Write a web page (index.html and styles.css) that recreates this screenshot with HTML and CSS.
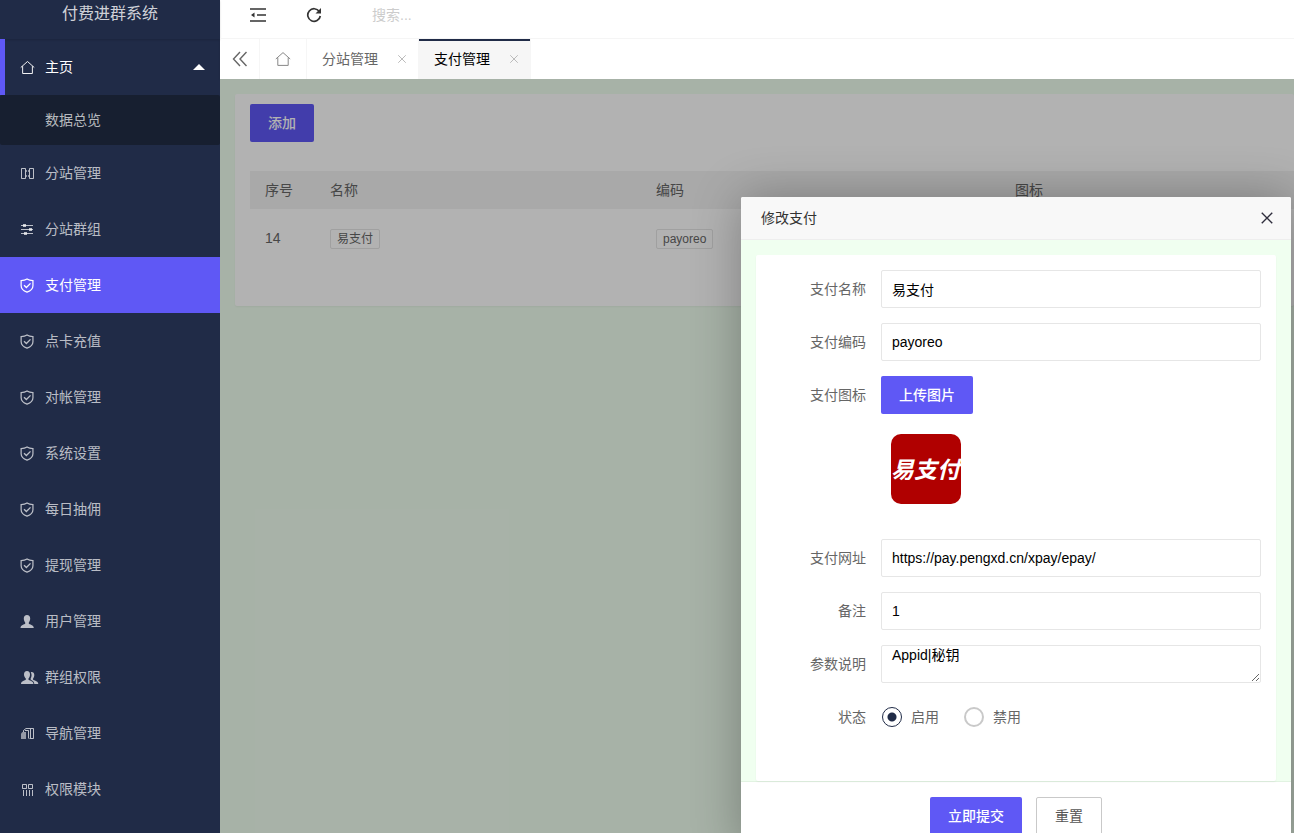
FILE: index.html
```
<!DOCTYPE html>
<html lang="zh-CN">
<head>
<meta charset="utf-8">
<title>付费进群系统</title>
<link rel="stylesheet" href="styles.css">
</head>
<body>
<svg class="sprite" aria-hidden="true">
  <symbol id="i-home" viewBox="0 0 16 16"><path d="M.8 8 8 1.600 15.200 8M2.800 6.600v7.800h10.400V6.600" fill="none" stroke="currentColor"/></symbol>
  <symbol id="i-shield" viewBox="0 0 16 16"><path d="M7.500 1c1.800 1.200 3.800 1.700 6.300 1.800v5.400c0 3-2.300 5.400-6.300 6.900-4-1.500-6.300-3.900-6.300-6.900V2.800C3.700 2.700 5.700 2.200 7.500 1z" fill="none" stroke="currentColor" stroke-width="1.300"/><path d="m4.300 7.700 2.500 2.500 4.400-4.500" fill="none" stroke="currentColor" stroke-width="1.400"/></symbol>
  <symbol id="i-columns" viewBox="0 0 15 15"><path d="M1.500 2.500h4v10h-4zM9.500 2.500h4v10h-4z" fill="none" stroke="currentColor"/><path d="M6 4h1v2H6zM8 4h1v2H8zM6 9h1v2H6zM8 9h1v2H8z" fill="currentColor" opacity=".7"/></symbol>
  <symbol id="i-sliders" viewBox="0 0 15 15"><path d="M1 3.500h12M1 7.500h12M1 11.500h12" stroke="currentColor"/><path d="M3 2h3v3H3zM9 6h3v3H9zM4 10h3v3H4z" fill="currentColor"/></symbol>
  <symbol id="i-user" viewBox="0 0 15 15"><path d="M7 1c2 0 3.200 1.500 3.200 3.500 0 1.700-.7 3-1.400 3.900v1.300c.5.700 5 1 5 4.300H.5c0-3.300 4.200-3.600 4.700-4.300V8.400C4.500 7.500 3.800 6.200 3.800 4.500 3.800 2.500 5 1 7 1z" fill="currentColor"/></symbol>
  <symbol id="i-users" viewBox="0 0 19 15"><path d="M7 1c2 0 3 1.500 3 3.500 0 1.700-.6 3-1.500 3.900v1.300c.5.700 5 1 5 4.300H1c0-3.300 4.300-3.600 4.800-4.300V8.400C4.900 7.500 4 6.200 4 4.500 4 2.500 5 1 7 1z" fill="currentColor"/><path d="M11.600 2c1.700 0 2.700 1.300 2.700 3 0 1.500-.5 2.600-1.200 3.400v1.400c.5.700 5.200 1 5.200 4.200h-4c0-2.200-1.800-3.500-3.600-4.300V8.300c.9-1.300 1.400-4 .1-6.100z" fill="currentColor"/></symbol>
  <symbol id="i-pages" viewBox="0 0 15 15"><path d="M3.500 6V4.500L6 2.500h7.500v10h-4M5 4.500h3.500v8M10.500 3v9" fill="none" stroke="currentColor"/><path d="M1 7.500 2.500 6H6v7H1z" fill="currentColor" opacity=".75"/></symbol>
  <symbol id="i-grid" viewBox="0 0 15 15"><path d="M2.500 2.500h4v4h-4zM8.500 2.500h4v4h-4zM3.500 8v6M6.500 8v6M9.500 8v6M12.500 8v6" fill="none" stroke="currentColor"/></symbol>
  <symbol id="i-cross" viewBox="0 0 16 16"><path d="m2 2 12 12m0-12L2 14" fill="none" stroke="currentColor" stroke-width="1.600"/></symbol>
</svg>

<div class="app">
  <aside class="side">
    <div class="logo">付费进群系统</div>
    <nav class="menu">
      <a class="item open" href="#"><svg class="icon"><use href="#i-home"/></svg><span>主页</span><i class="caret"></i></a>
      <a class="subitem" href="#">数据总览</a>
      <a class="item" href="#"><svg class="icon"><use href="#i-columns"/></svg><span>分站管理</span></a>
      <a class="item" href="#"><svg class="icon"><use href="#i-sliders"/></svg><span>分站群组</span></a>
      <a class="item active" href="#"><svg class="icon"><use href="#i-shield"/></svg><span>支付管理</span></a>
      <a class="item" href="#"><svg class="icon"><use href="#i-shield"/></svg><span>点卡充值</span></a>
      <a class="item" href="#"><svg class="icon"><use href="#i-shield"/></svg><span>对帐管理</span></a>
      <a class="item" href="#"><svg class="icon"><use href="#i-shield"/></svg><span>系统设置</span></a>
      <a class="item" href="#"><svg class="icon"><use href="#i-shield"/></svg><span>每日抽佣</span></a>
      <a class="item" href="#"><svg class="icon"><use href="#i-shield"/></svg><span>提现管理</span></a>
      <a class="item" href="#"><svg class="icon"><use href="#i-user"/></svg><span>用户管理</span></a>
      <a class="item" href="#"><svg class="icon wide"><use href="#i-users"/></svg><span>群组权限</span></a>
      <a class="item" href="#"><svg class="icon"><use href="#i-pages"/></svg><span>导航管理</span></a>
      <a class="item" href="#"><svg class="icon"><use href="#i-grid"/></svg><span>权限模块</span></a>
    </nav>
  </aside>

  <div class="main">
    <header class="topbar">
      <button class="tool" type="button" aria-label="收起菜单">
        <svg viewBox="0 0 16 16"><path d="M0 2h16M7 8h9M0 14h16" stroke="currentColor" stroke-width="1.600"/><path d="M4.500 5.500v5L1 8z" fill="currentColor"/></svg>
      </button>
      <button class="tool" type="button" aria-label="刷新">
        <svg viewBox="0 0 16 16"><path d="M13.300 4.500A6.300 6.300 0 1 0 14.300 9" fill="none" stroke="currentColor" stroke-width="1.700"/><path d="M15 1v5.500H9.500z" fill="currentColor"/></svg>
      </button>
      <input class="search" type="text" placeholder="搜索..." aria-label="搜索">
    </header>
    <div class="tabs">
      <button class="tab-tool" type="button" aria-label="向左"><svg viewBox="0 0 16 16"><path d="M8 1 1.500 8 8 15M14.500 1 8 8l6.500 7" fill="none" stroke="currentColor" stroke-width="1.400"/></svg></button>
      <button class="tab-tool home" type="button" aria-label="主页"><svg><use href="#i-home"/></svg></button>
      <div class="tab"><span>分站管理</span><button class="tab-close" type="button" aria-label="关闭"><svg><use href="#i-cross"/></svg></button></div>
      <div class="tab current"><span>支付管理</span><button class="tab-close" type="button" aria-label="关闭"><svg><use href="#i-cross"/></svg></button></div>
    </div>

    <div class="stage">
      <section class="card">
        <button class="btn" type="button">添加</button>
        <table class="list">
          <colgroup><col class="c-no"><col class="c-name"><col class="c-code"><col></colgroup>
          <thead><tr><th>序号</th><th>名称</th><th>编码</th><th>图标</th></tr></thead>
          <tbody><tr><td>14</td><td><span class="tag">易支付</span></td><td><span class="tag">payoreo</span></td><td></td></tr></tbody>
        </table>
      </section>
      <div class="shade"></div>

      <section class="dialog" role="dialog" aria-labelledby="dialog-title">
        <header class="dialog-head">
          <h2 id="dialog-title">修改支付</h2>
          <button type="button" aria-label="关闭"><svg><use href="#i-cross"/></svg></button>
        </header>
        <form>
          <div class="dialog-body">
            <div class="fields">
              <label for="f-name">支付名称</label><input class="text" id="f-name" type="text" value="易支付">
              <label for="f-code">支付编码</label><input class="text" id="f-code" type="text" value="payoreo">
              <label for="f-icon">支付图标</label>
              <div class="upload">
                <button class="btn" id="f-icon" type="button">上传图片</button>
                <div class="preview">易支付</div>
              </div>
              <label for="f-url">支付网址</label><input class="text" id="f-url" type="text" value="https://pay.pengxd.cn/xpay/epay/">
              <label for="f-note">备注</label><input class="text" id="f-note" type="text" value="1">
              <label for="f-desc">参数说明</label><textarea class="text" id="f-desc">Appid|秘钥</textarea>
              <span class="label">状态</span>
              <div class="radios">
                <label><input type="radio" name="status" checked>启用</label>
                <label><input type="radio" name="status">禁用</label>
              </div>
            </div>
          </div>
          <footer class="dialog-foot">
            <button class="btn" type="submit">立即提交</button>
            <button class="btn plain" type="reset">重置</button>
          </footer>
        </form>
      </section>
    </div>
  </div>
</div>
</body>
</html>
```
FILE: styles.css
```
* { box-sizing: border-box; }
body, button, input, textarea {
  font-family: "Liberation Sans", "Noto Sans CJK SC", sans-serif;
  font-size: 14px;
}
body { margin: 0; line-height: 24px; color: #666; }
button { margin: 0; padding: 0; border: 0; background: none; color: inherit; cursor: pointer; }
a { color: inherit; text-decoration: none; }
.sprite { display: none; }

.app { display: flex; height: 100vh; overflow: hidden; }

/* sidebar */
.side { flex: 0 0 220px; background: #202b47; color: rgba(255, 255, 255, .7); }
.logo {
  height: 39px;
  padding-top: 2px;
  text-align: center;
  font-size: 16px;
  box-shadow: 0 1px 2px rgba(0, 0, 0, .15);
  color: rgba(255, 255, 255, .8);
}
.item { display: flex; align-items: center; height: 56px; padding: 0 15px 0 20px; }
.item .icon { flex: none; width: 15px; height: 15px; margin-right: 10px; }
.item .wide { width: 19px; margin-right: 6px; }
.item.open { border-left: 5px solid #5f58f5; padding-left: 15px; color: #fff; }
.item.active { background: #5f58f5; color: #fff; }
.caret { margin-left: auto; border: 6px solid transparent; border-top: 0; border-bottom-color: #fff; }
.subitem { display: block; padding: 13px 0 13px 45px; background: #171f30; border-radius: 2px; }

/* top bars */
.main { flex: 1; min-width: 0; display: flex; flex-direction: column; }
.topbar { display: flex; align-items: center; height: 39px; padding: 0 30px 8px; border-bottom: 1px solid #f6f6f6; color: #333; }
.tool { width: 16px; height: 16px; margin-right: 40px; }
.tool svg { display: block; width: 16px; height: 16px; }
.search { width: 200px; height: 30px; margin-left: 10px; padding: 0; border: 0; outline: 0; }
.search::placeholder { color: #ccc; }
.tabs { display: flex; height: 40px; box-shadow: 0 1px 2px rgba(0, 0, 0, .1); }
.tab-tool { display: flex; align-items: center; justify-content: center; width: 40px; border-right: 1px solid #f6f6f6; }
.tab-tool svg { width: 16px; height: 16px; }
.tab-tool.home { width: 47px; color: #888; }
.tab { display: flex; align-items: center; justify-content: space-between; width: 112px; padding: 0 11px 0 15px; border-right: 1px solid #f6f6f6; }
.tab.current { background: #f6f6f6; box-shadow: inset 0 2px #202b47; color: #000; }
.tab-close { width: 10px; height: 10px; color: #bbb; }
.tab-close svg, .dialog-head svg { display: block; width: 100%; height: 100%; }

/* page */
.stage { position: relative; flex: 1; overflow: hidden; padding: 15px 0 15px 15px; background: #f0fff0; }
.card { min-height: 212px; padding: 10px 0 10px 15px; background: #fff; border-radius: 2px; box-shadow: 0 1px 2px rgba(0, 0, 0, .05); }
.btn {
  height: 38px;
  padding: 0 18px 2px;
  border-radius: 2px;
  background: #5f58f5;
  color: #fff;
  font-weight: 500;
}
.btn.plain { border: 1px solid #c9c9c9; background: #fff; color: #555; font-weight: 400; }
.list { width: 100%; margin-top: 29px; border-collapse: collapse; table-layout: fixed; }
.c-no { width: 65px; }
.c-name { width: 326px; }
.c-code { width: 359px; }
.list th { height: 38px; padding: 0 15px; background: #f2f2f2; text-align: left; font-weight: 400; }
.list td { height: 58px; padding: 0 15px; }
.tag { display: inline-block; padding: 0 6px; border: 1px solid #e6e6e6; border-radius: 2px; font-size: 12px; line-height: 18px; vertical-align: middle; }
.shade { position: absolute; inset: 0; background: rgba(0, 0, 0, .3); }

/* dialog */
.dialog {
  position: absolute;
  top: 118px;
  right: 3px;
  width: 550px;
  background: #fff;
  border-radius: 2px;
  box-shadow: 1px 1px 50px rgba(0, 0, 0, .3);
}
.dialog-head { display: flex; align-items: center; justify-content: space-between; height: 43px; padding: 0 17px 0 20px; border-bottom: 1px solid #eee; border-radius: 2px 2px 0 0; background: #f8f8f8; }
.dialog-head h2 { margin: 0; font-size: 14px; font-weight: 400; color: #333; }
.dialog-head button { width: 14px; height: 14px; color: #2e2d3c; }
.dialog-body { padding: 15px 15px 0; background: #f0fff0; border-bottom: 1px solid #e2f3e2; }
.fields { display: grid; grid-template-columns: 110px 1fr; row-gap: 15px; padding: 15px 15px 45px 15px; background: #fff; border-radius: 2px; box-shadow: 0 1px 2px rgba(0, 0, 0, .05); }
.fields > label, .label { padding: 7px 15px 7px 0; text-align: right; }
.text { width: 100%; height: 38px; padding: 0 10px; border: 1px solid #e6e6e6; border-radius: 2px; outline: 0; background: #fff; color: #000; }
textarea.text { display: block; line-height: 18px; resize: vertical; overflow: hidden; }
.preview {
  width: 70px;
  height: 70px;
  margin: 20px 10px;
  overflow: hidden;
  border-radius: 10px;
  background: #b00000;
  color: #fff;
  font: italic 700 23px/68px "Noto Sans CJK SC", sans-serif;
  white-space: nowrap;
}
.radios { display: flex; align-items: center; gap: 24px; height: 38px; }
.radios label { display: flex; align-items: center; gap: 9px; }
.radios input { appearance: none; width: 20px; height: 20px; margin: 0 0 0 1px; border: 2px solid #c9c9c9; border-radius: 50%; }
.radios input:checked { border: 1px solid #202b47; background: radial-gradient(circle, #202b47 4px, transparent 5px); }
.dialog-foot { display: flex; justify-content: center; gap: 14px; padding: 15px; }
```
